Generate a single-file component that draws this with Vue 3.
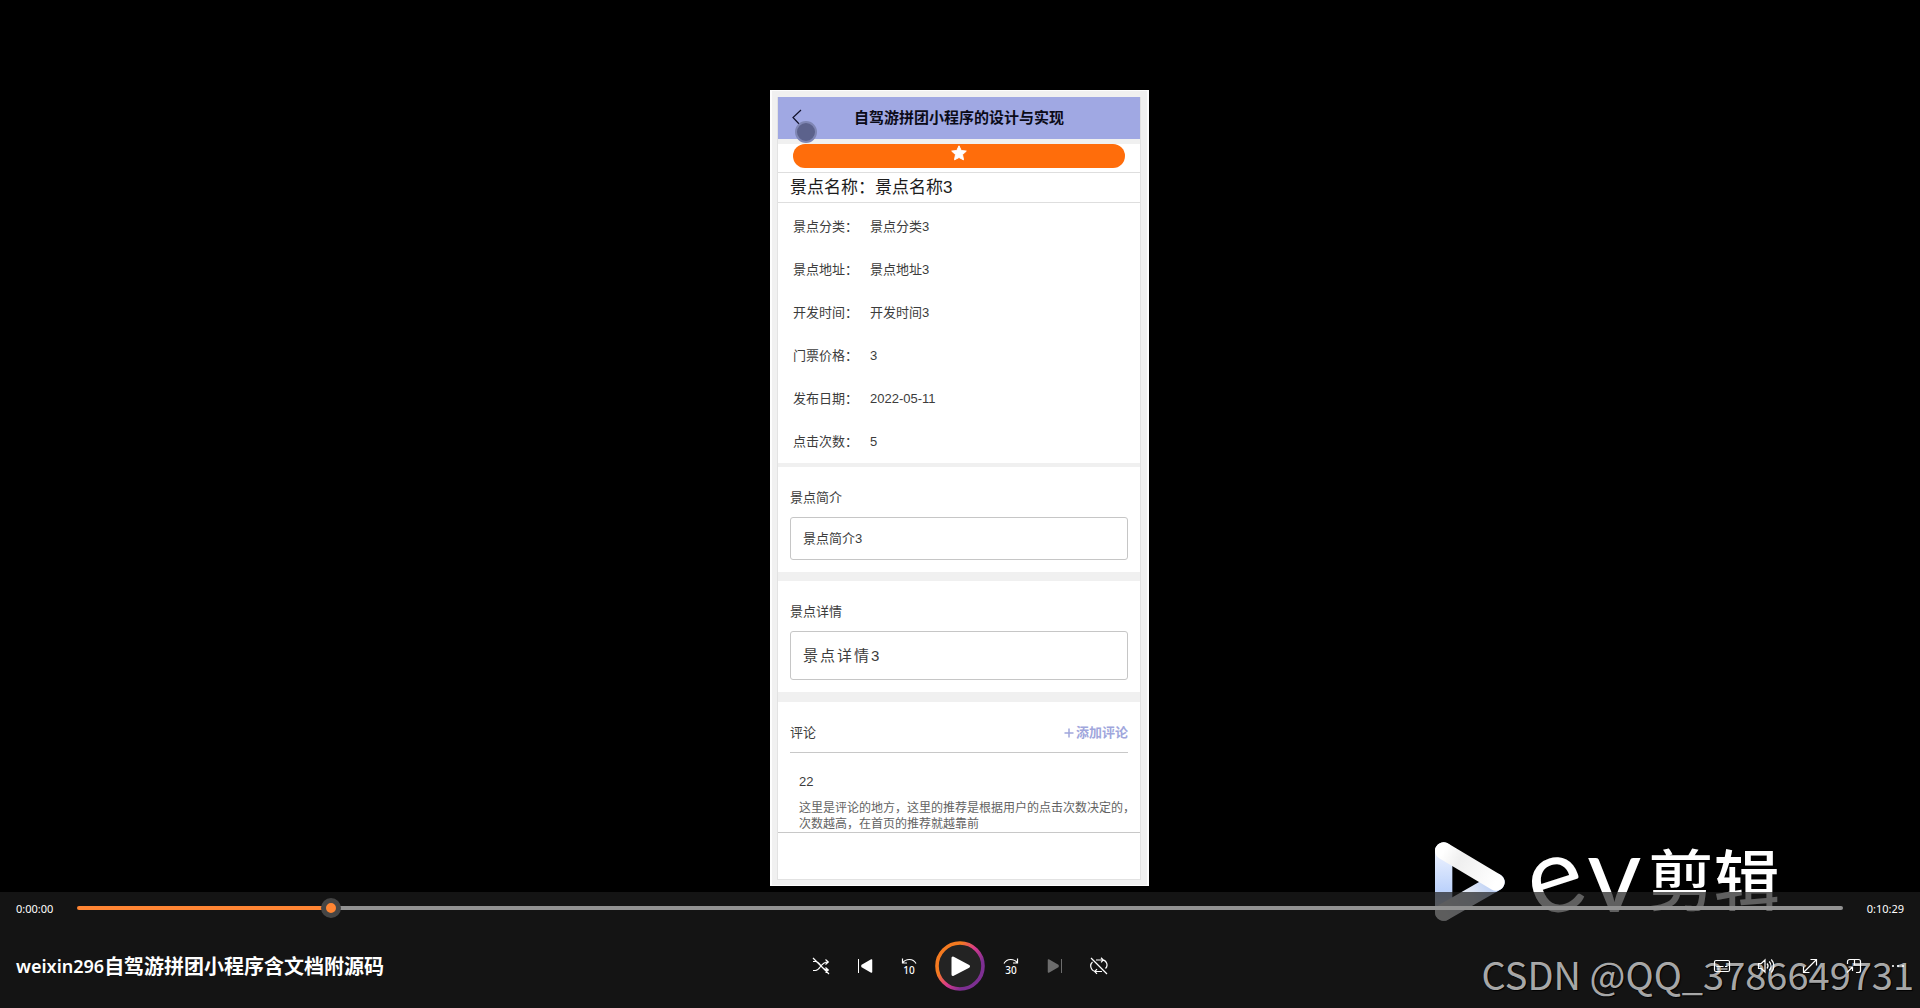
<script setup>
import { ref } from 'vue'

const title = '自驾游拼团小程序的设计与实现'
const spot = [
  { label: '景点分类：', value: '景点分类3' },
  { label: '景点地址：', value: '景点地址3' },
  { label: '开发时间：', value: '开发时间3' },
  { label: '门票价格：', value: '3' },
  { label: '发布日期：', value: '2022-05-11' },
  { label: '点击次数：', value: '5' },
]
const comments = [
  {
    user: '22',
    lines: ['这里是评论的地方，这里的推荐是根据用户的点击次数决定的，', '次数越高，在首页的推荐就越靠前'],
  },
]
const progress = ref(140)
</script>

<template>
  <div class="player">
    <main class="stage">
      <section class="phone">
        <div class="screen">
          <header class="nav">
            <button class="back" type="button" aria-label="返回">
              <svg width="10" height="18" viewBox="0 0 10 18"><path d="M9 1L1 8.500L9 17" fill="none" stroke="#10102a" stroke-width="1.200" /></svg>
            </button>
            <h1>{{ title }}</h1>
            <span class="pointer"></span>
          </header>

          <div class="favorite">
            <button type="button" aria-label="收藏">
              <svg width="16" height="16" viewBox="0 0 16 16"><path d="M8 .8l2.200 4.700 5.100.6-3.800 3.500 1 5.200L8 12.500l-4.500 2.300 1-5.200L.7 6.100l5.100-.6z" fill="#fff" stroke="#fff" stroke-linejoin="round" /></svg>
            </button>
          </div>

          <h2 class="name">景点名称：景点名称3</h2>

          <dl class="facts">
            <div v-for="item in spot" :key="item.label" class="fact">
              <dt>{{ item.label }}</dt>
              <dd>{{ item.value }}</dd>
            </div>
          </dl>

          <section class="block">
            <h3>景点简介</h3>
            <p class="box">景点简介3</p>
          </section>

          <section class="block">
            <h3>景点详情</h3>
            <p class="box detail">景点详情3</p>
          </section>

          <section class="comments">
            <div class="comments-head">
              <h3>评论</h3>
              <button type="button"><svg width="10" height="10" viewBox="0 0 10 10"><path d="M5 .5v9M.5 5h9" stroke="#a0a6dc" stroke-width="1.500" /></svg>添加评论</button>
            </div>
            <article v-for="c in comments" :key="c.user" class="comment">
              <h4>{{ c.user }}</h4>
              <p v-for="line in c.lines" :key="line">{{ line }}</p>
            </article>
          </section>
          <footer class="foot"></footer>
        </div>
      </section>

      <div class="brand">
        <svg width="70" height="79" viewBox="0 0 210 236">
          <defs>
            <linearGradient id="side" x1="0" y1="26" x2="0" y2="210" gradientUnits="userSpaceOnUse">
              <stop offset="0" stop-color="#eef3ff" /><stop offset=".65" stop-color="#bcd2fb" /><stop offset="1" stop-color="#e6eaf2" />
            </linearGradient>
            <linearGradient id="base" x1="26" y1="210" x2="183" y2="120" gradientUnits="userSpaceOnUse">
              <stop offset="0" stop-color="#f4f4f4" /><stop offset=".55" stop-color="#dfe6f4" /><stop offset="1" stop-color="#b5ccf6" />
            </linearGradient>
            <linearGradient id="top" x1="26" y1="26" x2="183" y2="120" gradientUnits="userSpaceOnUse">
              <stop offset="0" stop-color="#fff" /><stop offset=".3" stop-color="#efefef" /><stop offset="1" stop-color="#fff" />
            </linearGradient>
          </defs>
          <g fill="none" stroke-width="52" stroke-linecap="round">
            <path d="M26 26V210" stroke="url(#side)" />
            <path d="M26 210L183 120" stroke="url(#base)" />
            <path d="M26 26L183 120" stroke="url(#top)" />
          </g>
        </svg>
        <span class="brand-latin"><span class="tilt">e</span><span>v</span></span>
        <span class="brand-han">剪辑</span>
      </div>
    </main>

    <div class="controls">
      <div class="timeline">
        <span class="time">0:00:00</span>
        <input v-model="progress" class="seek" type="range" min="0" max="1000" aria-label="播放进度" :style="{ '--played': progress / 10 + '%' }" />
        <span class="time end">0:10:29</span>
      </div>

      <div class="bar">
        <div class="file"><span>weixin296</span><strong>自驾游拼团小程序含文档附源码</strong></div>

        <div class="transport">
          <button type="button" aria-label="随机播放">
            <svg width="18" height="18" viewBox="0 0 18 18" class="line"><path d="M1 4.500h2.500c5.500 0 5 8.500 12.500 8.500M1 13.500h2.500C8.500 13.500 8 5 16 5M13.500 2.500L16.300 5l-2.800 2.500M13.500 10.500l2.800 2.500-2.800 2.500M1 1l16 16" /></svg>
          </button>
          <button type="button" aria-label="上一个">
            <svg width="16" height="16" viewBox="0 0 16 16"><path d="M1.500 1v14" stroke="#fff" /><path d="M14.500 2v12L5 8.500v-1z" fill="#fff" stroke="#fff" stroke-width="1.500" stroke-linejoin="round" /></svg>
          </button>
          <button type="button" class="skip" aria-label="后退10秒">
            <svg width="16" height="7" viewBox="0 0 16 7" class="line"><path d="M1.500.5V5H6M1.500 5C5 .3 12 .2 15 5.500" /></svg>
            <span>10</span>
          </button>
          <button type="button" class="play" aria-label="播放">
            <svg width="50" height="50" viewBox="0 0 50 50">
              <defs>
                <linearGradient id="ring" x1="8" y1="12" x2="42" y2="38" gradientUnits="userSpaceOnUse">
                  <stop offset=".2" stop-color="#f47a20" /><stop offset=".52" stop-color="#d8398c" /><stop offset=".85" stop-color="#7d2f92" />
                </linearGradient>
              </defs>
              <circle cx="25" cy="25" r="23" fill="#232323" stroke="url(#ring)" stroke-width="3.600" />
              <path d="M18 17v16.500L33.500 25.300z" fill="#fff" stroke="#fff" stroke-width="3" stroke-linejoin="round" />
            </svg>
          </button>
          <button type="button" class="skip" aria-label="前进30秒">
            <svg width="16" height="7" viewBox="0 0 16 7" class="line"><path d="M14.500.5V5H10M14.500 5C11 .3 4 .2 1 5.500" /></svg>
            <span>30</span>
          </button>
          <button type="button" aria-label="下一个" disabled>
            <svg width="16" height="16" viewBox="0 0 16 16"><path d="M14.500 1v14" stroke="#6d6d6d" /><path d="M1.500 2v12L11 8.500v-1z" fill="#6d6d6d" stroke="#6d6d6d" stroke-width="1.500" stroke-linejoin="round" /></svg>
          </button>
          <button type="button" aria-label="循环播放">
            <svg width="18" height="18" viewBox="0 0 18 18" class="line"><path d="M6 3h5.500a5 5 0 0 1 4 8.500M11 .8L13.300 3 11 5.400M12 14.500H6.500a5.500 5.500 0 0 1-4-9.500M7 12.200l-2.300 2.300L7 16.900M1 1l16 16" /></svg>
          </button>
        </div>

        <div class="tools">
          <button type="button" aria-label="字幕">
            <svg width="18" height="18" viewBox="0 0 18 18" class="line"><rect x="1.500" y="3.500" width="15" height="11" rx="1.500" /><path d="M3.500 9.500h7M12 9.500h2.500M3.500 12h3M8 12h6.500" /></svg>
          </button>
          <button type="button" aria-label="音量">
            <svg width="18" height="18" viewBox="0 0 18 18" class="line"><path d="M1.500 6.500h2.800L8 3v12l-3.700-3.500H1.500zM10 6.500c1.300 1.500 1.300 3.500 0 5M12.200 4.500c2.300 2.600 2.300 6.400 0 9M14.300 2.500c3.400 3.700 3.400 9.300 0 13" /></svg>
          </button>
          <button type="button" aria-label="全屏">
            <svg width="18" height="18" viewBox="0 0 18 18" class="line"><path d="M2.500 15.500l13-13M9.500 2.500h6v6M2.500 9.500v6h6" /></svg>
          </button>
          <button type="button" aria-label="画中画">
            <svg width="18" height="18" viewBox="0 0 18 18" class="line"><path d="M2.500 7V4.500a2 2 0 0 1 2-2h9a2 2 0 0 1 2 2v9a2 2 0 0 1-2 2H11M9.500 2.500v5.500h6M2 15.500l5.500-5.500M3.500 10h4v4" /></svg>
          </button>
          <button type="button" aria-label="更多">
            <svg width="18" height="18" viewBox="0 0 18 18" fill="#fff"><circle cx="4" cy="9" r="1.100" /><circle cx="9" cy="9" r="1.100" /><circle cx="14" cy="9" r="1.100" /></svg>
          </button>
        </div>
      </div>
      <span class="watermark">CSDN @QQ_3786649731</span>
    </div>
  </div>
</template>

<style>
body {
  margin: 0;
  background: #000;
}
</style>

<style scoped>
* {
  box-sizing: border-box;
}

h1, h2, h3, h4, p, dl, dd {
  margin: 0;
  font-weight: 400;
}

button {
  padding: 0;
  border: 0;
  background: none;
  font: inherit;
  color: inherit;
  cursor: pointer;
}

svg {
  display: block;
}

.player {
  display: flex;
  flex-direction: column;
  min-height: 100vh;
  overflow: hidden;
  background: #000;
  color: #fff;
  font-family: "Noto Sans", "Noto Sans CJK SC", sans-serif;
}

.stage {
  position: relative;
  flex: 1;
  display: flex;
  justify-content: center;
  align-items: flex-start;
  padding: 90px 1px 6px 0;
}

/* recorded phone screen */
.phone {
  width: 379px;
  padding: 6px 6px 5px 5px;
  border: solid #fdfdfd;
  border-width: 1px 2px;
  background: #f0f0f0;
  color: #3c3c3c;
  font: 13px/20px "Liberation Sans", "Noto Sans CJK SC", sans-serif;
}

.screen {
  border: solid #e2e2e2;
  border-width: 0 1px 1px;
  background: #fff;
}

.nav {
  position: relative;
  display: flex;
  align-items: center;
  height: 42px;
  padding: 0 14px;
  background: #a0a8e3;
}

.back {
  width: 10px;
}

.nav h1 {
  flex: 1;
  margin-right: 10px;
  text-align: center;
  color: #0b0b18;
  font-size: 15px;
  font-weight: 700;
}

.pointer {
  position: absolute;
  left: 17px;
  top: 24px;
  width: 22px;
  height: 22px;
  border: 2px solid #7f86b4;
  border-radius: 50%;
  background: #5c628c;
}

.favorite {
  padding: 0 15px 4px;
  border-top: 5px solid #f0f0f0;
  border-bottom: 1px solid #dedede;
}

.favorite button {
  display: flex;
  justify-content: center;
  width: 100%;
  height: 24px;
  padding-top: 1px;
  border-radius: 12px;
  background: #ff6d0b;
}

.name {
  padding: 0 12px;
  border-bottom: 1px solid #dedede;
  color: #1c1c1c;
  font-size: 17px;
  line-height: 29px;
}

.facts {
  padding: 2px 15px 0;
}

.fact {
  display: flex;
  gap: 12px;
  line-height: 43px;
}

.fact dt {
  width: 65px;
}

.block {
  padding: 21px 12px 12px;
  border-top: 9px solid #f0f0f0;
}

.facts + .block {
  border-top-width: 4px;
}

h3 {
  font-size: 13px;
}

.box {
  margin-top: 9px;
  padding: 0 12px;
  border: 1px solid #c6c6c6;
  border-radius: 3px;
  line-height: 41px;
}

.detail {
  font-size: 15px;
  line-height: 47px;
  letter-spacing: 2px;
}

.comments {
  padding: 21px 12px 0;
  border-top: 10px solid #f0f0f0;
}

.comments-head {
  display: flex;
  justify-content: space-between;
  padding-bottom: 9px;
  border-bottom: 1px solid #c8c8c8;
}

.comments-head button {
  display: flex;
  align-items: center;
  gap: 2px;
  color: #a0a6dc;
  font-weight: 700;
}

.comment {
  padding: 19px 0 0 9px;
}

.comment h4 {
  margin-bottom: 8px;
  font-size: 13px;
}

.comment p {
  color: #636363;
  font-size: 12px;
  line-height: 16px;
  white-space: nowrap;
}

.foot {
  height: 47px;
  border-top: 1px solid #c8c8c8;
}

/* editor watermark lying over the video */
.brand {
  position: absolute;
  left: calc(50% + 475px);
  bottom: -29px;
  display: flex;
  align-items: center;
  height: 79px;
  line-height: 79px;
}

.brand-latin {
  display: flex;
  gap: 2px;
  margin: 0 0 20px 24px;
  font-family: Lato, sans-serif;
  font-size: 106px;
  font-weight: 400;
}

.tilt {
  display: block;
  transform: rotate(-18deg);
  transform-origin: 50% 70%;
}

.brand-han {
  margin: 0 0 10px 6px;
  font-family: "Noto Sans CJK SC", sans-serif;
  font-size: 66px;
  font-weight: 500;
}

.controls {
  position: relative;
  background: rgba(28, 28, 28, 0.7);
}

.timeline {
  display: flex;
  align-items: center;
  height: 32px;
  padding: 0 16px;
}

.time {
  width: 61px;
  font-size: 11px;
}

.end {
  text-align: right;
}

.seek {
  flex: 1;
  height: 22px;
  margin: 0;
  appearance: none;
  background: none;
}

.seek::-webkit-slider-runnable-track {
  height: 4px;
  border-radius: 2px;
  background: linear-gradient(to right, #ff8533 var(--played), #929292 var(--played));
}

.seek::-webkit-slider-thumb {
  appearance: none;
  width: 20px;
  height: 20px;
  margin-top: -8px;
  border: 5px solid #454545;
  border-radius: 50%;
  background: #ff8533;
}

.bar {
  position: relative;
  z-index: 1;
  display: grid;
  grid-template-columns: 1fr auto 1fr;
  align-items: center;
  height: 84px;
}

.file {
  display: flex;
  align-items: center;
  padding-left: 16px;
  font-size: 18px;
  font-weight: 600;
  line-height: 28px;
  white-space: nowrap;
}

.file strong {
  font-family: "Noto Sans CJK SC", sans-serif;
  font-size: 20px;
  font-weight: 700;
}

.transport,
.tools {
  display: flex;
  align-items: center;
}

.tools {
  justify-content: flex-end;
}

.transport button,
.tools button {
  display: flex;
  align-items: center;
  justify-content: center;
  width: 44px;
  height: 44px;
}

.transport .play {
  width: 50px;
  height: 50px;
  margin: 0 4px;
}

.transport .skip {
  flex-direction: column;
  font: 500 10px/10px "Noto Sans", sans-serif;
}

.line {
  fill: none;
  stroke: #fff;
  stroke-width: 1.200;
}

.watermark {
  position: absolute;
  right: 6px;
  bottom: 12px;
  color: rgba(205, 205, 205, 0.84);
  font: 38px/44px "Noto Sans CJK SC", sans-serif;
  text-shadow: 1px 1px 1px #000;
  white-space: nowrap;
  pointer-events: none;
}
</style>
